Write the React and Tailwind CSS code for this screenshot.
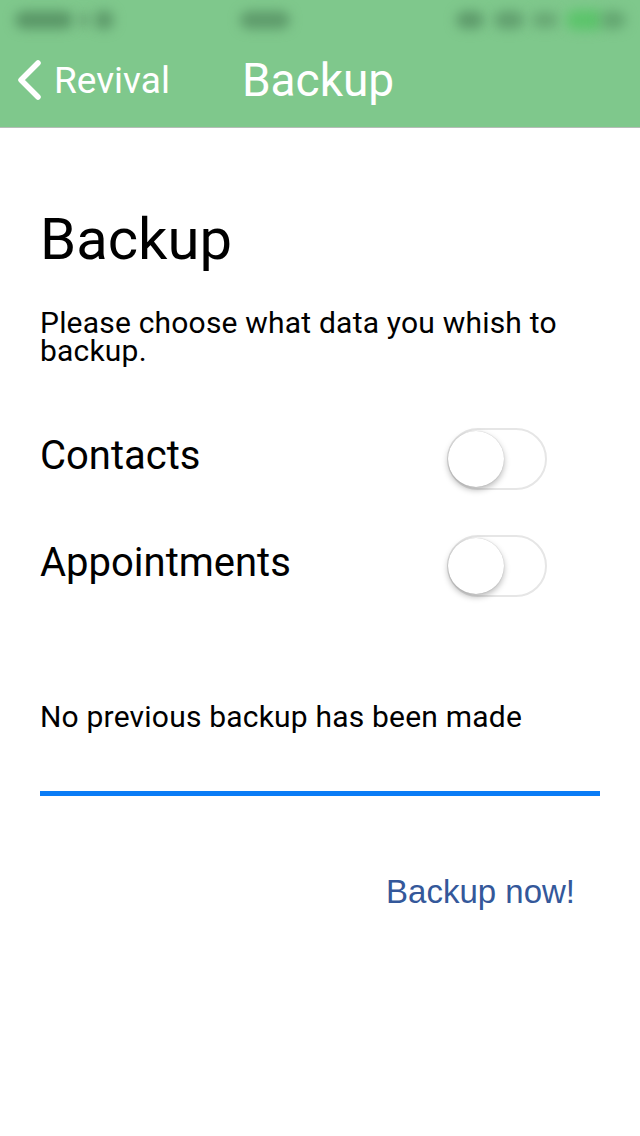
import React from "react";

function Toggle() {
  return (
    <div className="relative w-[100px] h-[62px] rounded-full border-2 border-[#e6e6e6] bg-white shrink-0">
      <div className="absolute left-[-1px] top-[1px] w-[56px] h-[56px] rounded-full bg-white shadow-[0_3px_6px_rgba(0,0,0,0.28),0_0_1px_rgba(0,0,0,0.25)]" />
    </div>
  );
}

function Blob({ className }) {
  return <div className={"rounded-full blur-[6px] " + className} />;
}

export default function App() {
  return (
    <div className="w-[640px] h-[1136px] bg-white font-['Roboto',sans-serif] text-black overflow-hidden">
      <div className="bg-[#7fc88c] h-[128px] border-b border-[#b5bdb7] flex flex-col">
        <div className="h-[40px] relative">
          <Blob className="absolute left-[15px] top-[11px] w-[58px] h-[18px] bg-[#5a9767]" />
          <Blob className="absolute left-[78px] top-[13px] w-[12px] h-[14px] bg-[#6aa676]" />
          <Blob className="absolute left-[94px] top-[10px] w-[20px] h-[20px] bg-[#5e9b6b]" />
          <Blob className="absolute left-[240px] top-[11px] w-[50px] h-[18px] bg-[#5e9b6b]" />
          <Blob className="absolute left-[456px] top-[11px] w-[28px] h-[18px] bg-[#5e9b6b]" />
          <Blob className="absolute left-[494px] top-[11px] w-[30px] h-[18px] bg-[#62a06f]" />
          <Blob className="absolute left-[532px] top-[12px] w-[26px] h-[16px] bg-[#68a874]" />
          <Blob className="absolute left-[566px] top-[10px] w-[38px] h-[20px] bg-[#5cc46b]" />
          <Blob className="absolute left-[600px] top-[11px] w-[26px] h-[18px] bg-[#64a771]" />
        </div>
        <div className="flex items-center h-[88px] pb-[6px]">
          <svg width="30" height="44" viewBox="0 0 30 44" className="ml-[14px]">
            <polyline points="24,5 7,22 24,39" fill="none" stroke="white" strokeWidth="5.5" strokeLinecap="round" strokeLinejoin="round" />
          </svg>
          <span className="ml-[10px] text-white text-[37px] leading-none">Revival</span>
          <span className="ml-[72px] text-white text-[46px] leading-none">Backup</span>
        </div>
      </div>

      <div className="px-[40px] flex flex-col">
        <h1 className="mt-[82px] text-[58px] leading-none font-normal">Backup</h1>
        <p className="mt-[41px] text-[30px] leading-[28px] tracking-[0.2px]">Please choose what data you whish to backup.</p>

        <div className="mt-[63px] flex items-center justify-between pr-[53px]">
          <span className="text-[40px] leading-none pb-[6px]">Contacts</span>
          <Toggle />
        </div>
        <div className="mt-[45px] flex items-center justify-between pr-[53px]">
          <span className="text-[40px] leading-none pb-[6px]">Appointments</span>
          <Toggle />
        </div>

        <p className="mt-[106px] text-[30px] leading-[28px] tracking-[0.2px]">No previous backup has been made</p>
        <div className="mt-[60px] h-[5px] bg-[#0a7cf6]" />
        <div className="mt-[80px] flex justify-end pr-[25px]">
          <span className="font-['Liberation_Sans',Arial,sans-serif] text-[33px] leading-[32px] text-[#34589a]">Backup now!</span>
        </div>
      </div>
    </div>
  );
}
